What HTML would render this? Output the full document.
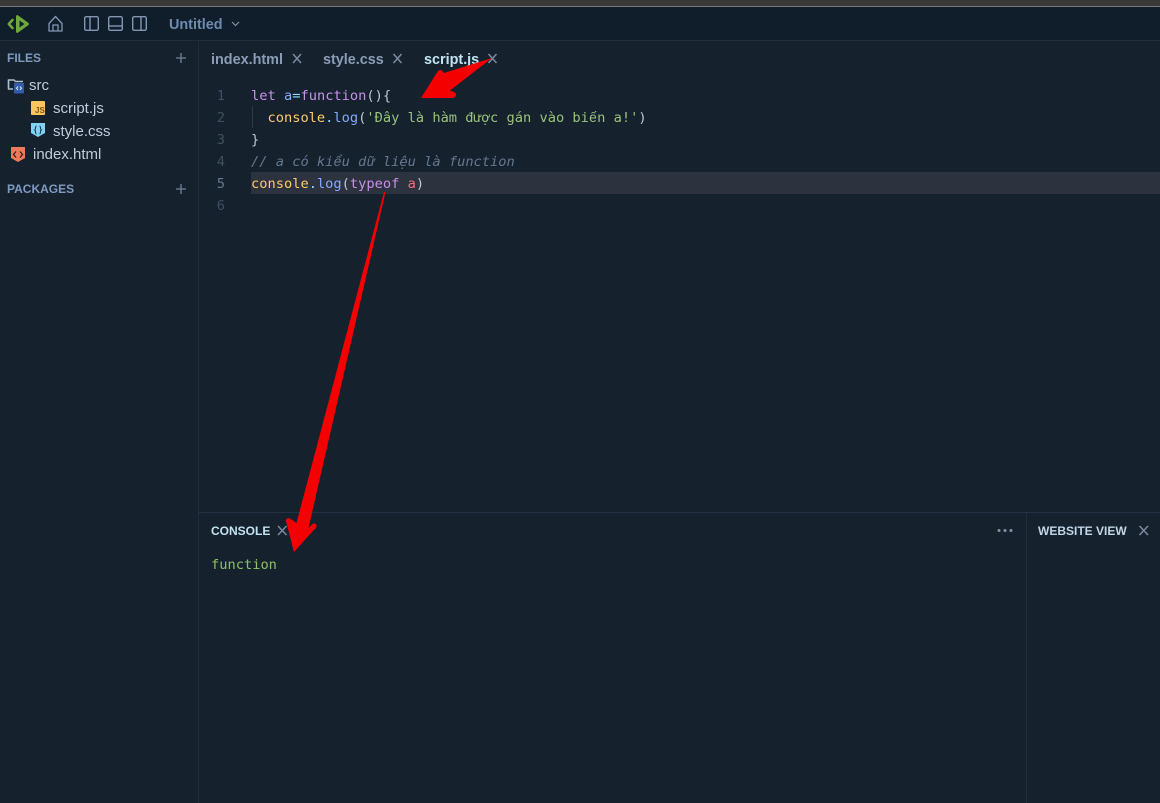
<!DOCTYPE html>
<html><head><meta charset="utf-8">
<style>
html,body{margin:0;padding:0;background:#16212e;width:1160px;height:803px;overflow:hidden}
#r{position:relative;width:1160px;height:803px;overflow:hidden;font-family:"Liberation Sans",sans-serif}
.a{position:absolute;white-space:pre}
.ui{font-size:15px;line-height:20px;color:#c0ccda}
.h{font-size:12px;line-height:16px;font-weight:bold;color:#7f9ac0}
.tab{font-size:14.4px;line-height:20px;font-weight:bold;color:#8a9db5}
.c{font-family:"DejaVu Sans Mono","Liberation Mono",monospace;font-size:13.7px;line-height:22px;color:#bcc7d6}
.n{color:#3f4f63;text-align:right;width:30px;left:195px}
.k{color:#c792ea}.b{color:#82aaff}.y{color:#ffcb6b}.g{color:#98c379}.r{color:#f07178}.p{color:#89ddff}
.l{font-family:"Liberation Mono",monospace;font-size:13.75px}
svg{position:absolute;overflow:visible}
</style></head><body><div id="r">
<div class="a" style="left:0;top:0;width:1160px;height:6px;background:#383838"></div>
<div class="a" style="left:0;top:6px;width:1160px;height:1px;background:#777"></div>
<div class="a" style="left:0;top:7px;width:1160px;height:33px;background:#101d2b"></div>
<div class="a" style="left:0;top:40px;width:1160px;height:1px;background:#1f2d3d"></div>
<div class="a" style="left:198px;top:41px;width:1px;height:762px;background:#1f2d3d"></div>
<div class="a" style="left:199px;top:512px;width:961px;height:1px;background:#243245"></div>
<div class="a" style="left:1026px;top:513px;width:1px;height:290px;background:#1f2d3d"></div>

<svg style="left:0;top:0" width="240" height="40" fill="none">
<path d="M12.5 20 L8.800 24 L12.5 28" stroke="#6fa83c" stroke-width="2.600" stroke-linecap="round" stroke-linejoin="round"/>
<path d="M17.500 15 Q16 15 16 17 V31 Q16 33 17.500 33 L28.500 25 Q29.500 24 28.500 23 Z M19.500 20.500 V27.500 L24.500 24 Z" fill="#6fa83c" fill-rule="evenodd"/>
<path d="M49 23.5 L55.5 16.5 L62 23.5 V31 H49 Z" stroke="#8397b2" stroke-width="1.300" stroke-linejoin="round"/>
<path d="M53 31 V25 H58 V31" stroke="#8397b2" stroke-width="1.300"/>
<g stroke="#8397b2" stroke-width="1.400">
<rect x="84.700" y="16.700" width="13.600" height="13.600" rx="1.500"/><path d="M90 17 V30"/>
<rect x="108.700" y="16.700" width="13.600" height="13.600" rx="1.500"/><path d="M109 26 H122"/>
<rect x="132.700" y="16.700" width="13.600" height="13.600" rx="1.500"/><path d="M141 17 V30"/>
</g>
<path d="M232 22 L235.500 25.500 L239 22" stroke="#7f93ad" stroke-width="1.200"/>
</svg>
<div class="a" style="left:169px;top:15px;font-size:14.400px;line-height:20px;font-weight:bold;color:#6f8cb0">Untitled</div>

<div class="a h" style="left:7px;top:50px">FILES</div>
<div class="a h" style="left:7px;top:181px">PACKAGES</div>
<svg style="left:0;top:0" width="200" height="200" fill="none">
<path d="M176 58 H186 M181 53 V63 M176 189 H186 M181 184 V194" stroke="#71829a" stroke-width="1.300"/>
<path d="M8.500 88 V80 H14 L15.500 81.500 H23" stroke="#a9c0cf" stroke-width="1.400"/>
<path d="M8.500 80 V89 H13" stroke="#a9c0cf" stroke-width="1.400"/>
<rect x="14" y="83" width="10" height="10.500" rx="1" fill="#2f5cae"/>
<path d="M18 86.500 L16.500 88.200 L18 90 M20 86.500 L21.500 88.200 L20 90" stroke="#dbe6f5" stroke-width="1"/>
<rect x="31" y="101" width="14" height="14" rx="1" fill="#f8c55f"/>
<text x="35" y="113" font-family="Liberation Sans" font-size="8" font-weight="bold" fill="#7a5a17">JS</text>
<path d="M31 123 H45 V133 L38 137 L31 133 Z" fill="#7fd3f7"/>
<path d="M36.500 126 C35 126 36 129.500 34.800 130 C36 130.500 35 134 36.500 134 M39.500 126 C41 126 40 129.500 41.200 130 C40 130.500 41 134 39.500 134" stroke="#20394e" stroke-width="1.100"/>
<path d="M11 147 H25 V158 L18 162 L11 158 Z" fill="#ee7a5c"/>
<path d="M16 151.500 L13.500 154.500 L16 157.500 M20 151.500 L22.500 154.500 L20 157.500" stroke="#3a1f1a" stroke-width="1.300"/>
</svg>
<div class="a ui" style="left:29px;top:76px">src</div>
<div class="a ui" style="left:53px;top:99px">script.js</div>
<div class="a ui" style="left:53px;top:122px">style.css</div>
<div class="a ui" style="left:33px;top:145px">index.html</div>

<div class="a tab" style="left:211px;top:50px">index.html</div>
<div class="a tab" style="left:323px;top:50px">style.css</div>
<div class="a tab" style="left:424px;top:50px;color:#c2e4f2">script.js</div>
<svg style="left:0;top:0" width="1160" height="803" fill="none">
<path d="M293 54 L301 63 M301 54 L293 63 M393.500 54 L401.500 63 M401.500 54 L393.500 63 M488.500 54 L496.500 63 M496.500 54 L488.500 63 M278 526 L286.500 535 M286.500 526 L278 535 M1139.500 526 L1148 535 M1148 526 L1139.500 535" stroke="#7b8aa0" stroke-width="1.500"/>
<circle cx="999" cy="530.500" r="1.500" fill="#8493a8"/><circle cx="1005" cy="530.500" r="1.500" fill="#8493a8"/><circle cx="1011" cy="530.500" r="1.500" fill="#8493a8"/>
<path d="M252.500 106 V128" stroke="#2d3b4c" stroke-width="1"/>
</svg>

<div class="a" style="left:251px;top:172px;width:909px;height:22px;background:#2c323e"></div>
<div class="a c n" style="top:85px">1</div>
<div class="a c n" style="top:107px">2</div>
<div class="a c n" style="top:129px">3</div>
<div class="a c n" style="top:151px">4</div>
<div class="a c n" style="top:173px;color:#66788d">5</div>
<div class="a c n" style="top:195px">6</div>
<div class="a c" style="left:251px;top:85px"><span class="k">let</span> <span class="b">a</span><span class="p">=</span><span class="k">function</span>(){</div>
<div class="a c" style="left:251px;top:107px">  <span class="y">console</span><span class="p">.</span><span class="b">log</span>(<span class="g">'Đây là hàm được gán vào bi<span class="l">ế</span>n a!'</span>)</div>
<div class="a c" style="left:251px;top:129px">}</div>
<div class="a c" style="left:251px;top:151px;color:#64788f;font-style:italic">// a có ki<span class="l">ể</span>u <span class="l">dữ</span> liệu là function</div>
<div class="a c" style="left:251px;top:173px"><span class="y">console</span><span class="p">.</span><span class="b">log</span>(<span class="k">typeof</span> <span class="r">a</span>)</div>

<div class="a h" style="left:211px;top:523px;color:#c2e4f2">CONSOLE</div>
<div class="a h" style="left:1038px;top:523px;color:#c2d6e6">WEBSITE VIEW</div>
<div class="a c" style="left:211px;top:554px;color:#8cc265">function</div>

<svg style="left:0;top:0" width="1160" height="803">
<path d="M492 58 L444 73 L441.500 70 Q440 69.500 438 71 L421 98 L452 98 Q457 97 456 94 Q455 92 450 90.500 Z" fill="#f50000"/>
<path d="M385.500 192 L384 192 L296.500 523 L290 518.500 Q286 517.500 286 521 L294 552 L316.500 527 Q317 523 313 523.500 L308.500 528 Z" fill="#f50000"/>
</svg>
</div></body></html>
